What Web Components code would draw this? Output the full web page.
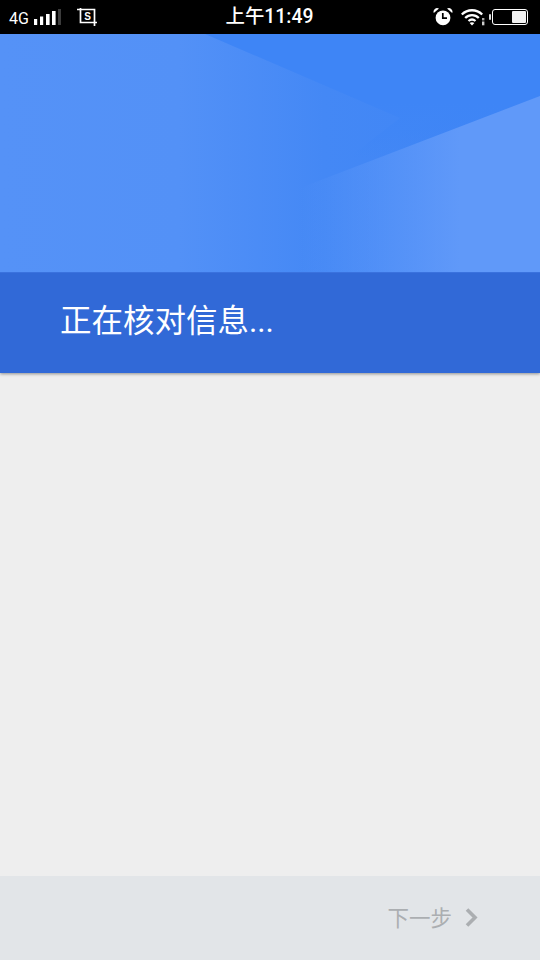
<!DOCTYPE html>
<html lang="zh-CN">
<head>
<meta charset="utf-8">
<title>正在核对信息</title>
<style>
    html, body { margin: 0; height: 100%; }
    body {
        background: #eeeeee;
        font-family: "Roboto", "Noto Sans CJK SC", sans-serif;
    }
</style>
</head>
<body>
<app-screen>
    <status-bar time="上午11:49"></status-bar>
    <hero-banner>正在核对信息...</hero-banner>
    <wizard-footer>下一步</wizard-footer>
</app-screen>

<script>
/* Page column: status bar and banner on top, footer pinned to the bottom. */
class AppScreen extends HTMLElement {
    constructor() {
        super();
        this.attachShadow({ mode: 'open' });
    }

    connectedCallback() {
        this.shadowRoot.innerHTML = `
            <style>
                :host {
                    display: flex;
                    flex-direction: column;
                    height: 960px;
                    width: 540px;
                    overflow: hidden;
                    background: #eeeeee;
                }
            </style>
            <slot></slot>`;
    }
}

/* Android-style status bar. Icons are inline SVG. */
class StatusBar extends HTMLElement {
    constructor() {
        super();
        this.attachShadow({ mode: 'open' });
    }

    connectedCallback() {
        const time = this.getAttribute('time') || '';

        this.shadowRoot.innerHTML = `
            <style>
                :host {
                    display: grid;
                    grid-template-columns: 1fr auto 1fr;
                    align-items: center;
                    flex: none;
                    height: 34px;
                    background: #000;
                    color: #fff;
                }
                .left, .right { display: flex; align-items: center; }
                .left { padding-left: 9px; }
                .right { justify-content: flex-end; padding-right: 12px; }
                .net {
                    font: 16px/18px "Roboto", sans-serif;
                    margin-top: 4px;
                    width: 25px;
                }
                .time {
                    font: 500 19.4px/22px "Roboto", "Noto Sans CJK SC", sans-serif;
                    margin-top: -1px;
                    padding-right: 1px;
                }
                .crop { position: relative; width: 20px; height: 18px; margin-left: 15px; margin-top: -1px; }
                .crop span {
                    position: absolute;
                    left: 3px;
                    right: 2px;
                    top: 3px;
                    text-align: center;
                    font: 700 10px/12px "Liberation Sans", sans-serif;
                }
                svg { display: block; }
                .alarm { margin-right: 8px; }
                .wifi { margin-right: 4px; }
            </style>
            <div class="left">
                <span class="net">4G</span>
                <svg class="signal" width="28" height="18" viewBox="0 0 28 18">
                    <rect x="0" y="11" width="3.2" height="6" fill="#fff"/>
                    <rect x="6" y="8.5" width="3.2" height="8.5" fill="#fff"/>
                    <rect x="12" y="6" width="3.6" height="11" fill="#fff"/>
                    <rect x="18" y="3" width="3.6" height="14" fill="#fff"/>
                    <rect x="24" y="1" width="3" height="16" fill="#3c3c3c"/>
                </svg>
                <div class="crop">
                    <svg width="20" height="18" viewBox="0 0 20 18" fill="none" stroke="#fff">
                        <path d="M0 1.5 H17.5 V18 M3.5 0 V14.5 H20" stroke-width="1.7"/>
                    </svg>
                    <span>S</span>
                </div>
            </div>
            <div class="time">${time}</div>
            <div class="right">
                <svg class="alarm" width="20" height="20" viewBox="0 0 20 20">
                    <circle cx="10" cy="10.8" r="7.4" fill="#fff"/>
                    <path d="M0.8 6 A3.6 3.6 0 0 1 6 1.6 Z M19.2 6 A3.6 3.6 0 0 0 14 1.6 Z" fill="#fff"/>
                    <path d="M9.8 6 V11.2 H14" fill="none" stroke="#000" stroke-width="1.7"/>
                </svg>
                <svg class="wifi" width="24" height="18" viewBox="0 0 24 18" fill="none" stroke="#fff" stroke-width="2.3">
                    <path d="M0.8 6.5 C6.5 0.8 15.5 0.8 21.2 6.5"/>
                    <path d="M4.2 10 C8 6.2 14 6.2 17.8 10"/>
                    <path d="M7.5 13 C9.6 11.2 12.4 11.2 14.5 13"/>
                    <path d="M11 17.4 L8.6 15 C10 14 12 14 13.4 15 Z" fill="#fff" stroke="none"/>
                    <rect x="21" y="10" width="2.4" height="2.4" fill="#aaa" stroke="none"/>
                    <rect x="21" y="13.5" width="2.4" height="3.8" fill="#ccc" stroke="none"/>
                </svg>
                <svg class="battery" width="39" height="16" viewBox="0 0 39 16">
                    <rect x="0" y="5" width="2" height="6" rx="1" fill="#ddd"/>
                    <rect x="3.5" y="0.5" width="35" height="15" rx="2.5" fill="#000" stroke="#fff"/>
                    <rect x="23" y="2" width="14" height="12" rx="1" fill="#f2f2f2"/>
                </svg>
            </div>`;
    }
}

/* Blue banner: faceted artwork above, darker title band below. */
class HeroBanner extends HTMLElement {
    constructor() {
        super();
        this.attachShadow({ mode: 'open' });
    }

    connectedCallback() {
        this.shadowRoot.innerHTML = `
            <style>
                :host {
                    display: block;
                    flex: none;
                    position: relative;
                    z-index: 1;
                    box-shadow: 0 1px 3px rgba(0, 0, 0, 0.4);
                }
                .art { display: block; width: 540px; height: 238px; }
                .title {
                    display: flex;
                    align-items: center;
                    box-sizing: border-box;
                    height: 101px;
                    padding: 0 0 2px 60px;
                    background: #3169d7;
                    border-top: 1px solid #3a72de;
                    color: #fff;
                    font: 400 31.5px/40px "Roboto", "Noto Sans CJK SC", sans-serif;
                    white-space: nowrap;
                }
            </style>
            <svg class="art" viewBox="0 0 540 238" preserveAspectRatio="none">
                <defs>
                    <linearGradient id="base" gradientUnits="userSpaceOnUse" x1="0" y1="0" x2="540" y2="0">
                        <stop offset="0" stop-color="#5592f7"/>
                        <stop offset="0.33" stop-color="#5391f7"/>
                        <stop offset="0.6" stop-color="#4488f5"/>
                        <stop offset="1" stop-color="#3e85f6"/>
                    </linearGradient>
                    <linearGradient id="wedge" gradientUnits="userSpaceOnUse" x1="0" y1="0" x2="0" y2="125">
                        <stop offset="0" stop-color="#3e85f6"/>
                        <stop offset="0.55" stop-color="#3e85f6"/>
                        <stop offset="1" stop-color="#3e85f6" stop-opacity="0"/>
                    </linearGradient>
                    <linearGradient id="lower" gradientUnits="userSpaceOnUse" x1="300" y1="0" x2="460" y2="0">
                        <stop offset="0" stop-color="#6099f9" stop-opacity="0"/>
                        <stop offset="1" stop-color="#6099f9"/>
                    </linearGradient>
                </defs>
                <rect width="540" height="238" fill="url(#base)"/>
                <polygon points="205,0 540,0 540,62 320,146 400,84" fill="url(#wedge)"/>
                <polygon points="540,62 300,154 300,238 540,238" fill="url(#lower)"/>
            </svg>
            <div class="title"><slot></slot></div>`;
    }
}

/* Bottom navigation bar with the disabled "next" action. */
class WizardFooter extends HTMLElement {
    constructor() {
        super();
        this.attachShadow({ mode: 'open' });
    }

    connectedCallback() {
        this.shadowRoot.innerHTML = `
            <style>
                :host {
                    display: flex;
                    align-items: center;
                    justify-content: flex-end;
                    gap: 13px;
                    box-sizing: border-box;
                    flex: none;
                    height: 84px;
                    margin-top: auto;
                    padding: 0 62px 2px 0;
                    background: #e2e5e8;
                    color: #abaeb1;
                    font: 400 21.5px/28px "Noto Sans CJK SC", sans-serif;
                }
                svg { display: block; margin-top: 1px; }
            </style>
            <slot></slot>
            <svg width="13" height="19" viewBox="0 0 13 19" fill="none" stroke="#abaeb1" stroke-width="3.6">
                <path d="M2 1.5 L10 9.5 L2 17.5"/>
            </svg>`;
    }
}

customElements.define('app-screen', AppScreen);
customElements.define('status-bar', StatusBar);
customElements.define('hero-banner', HeroBanner);
customElements.define('wizard-footer', WizardFooter);
</script>
</body>
</html>
